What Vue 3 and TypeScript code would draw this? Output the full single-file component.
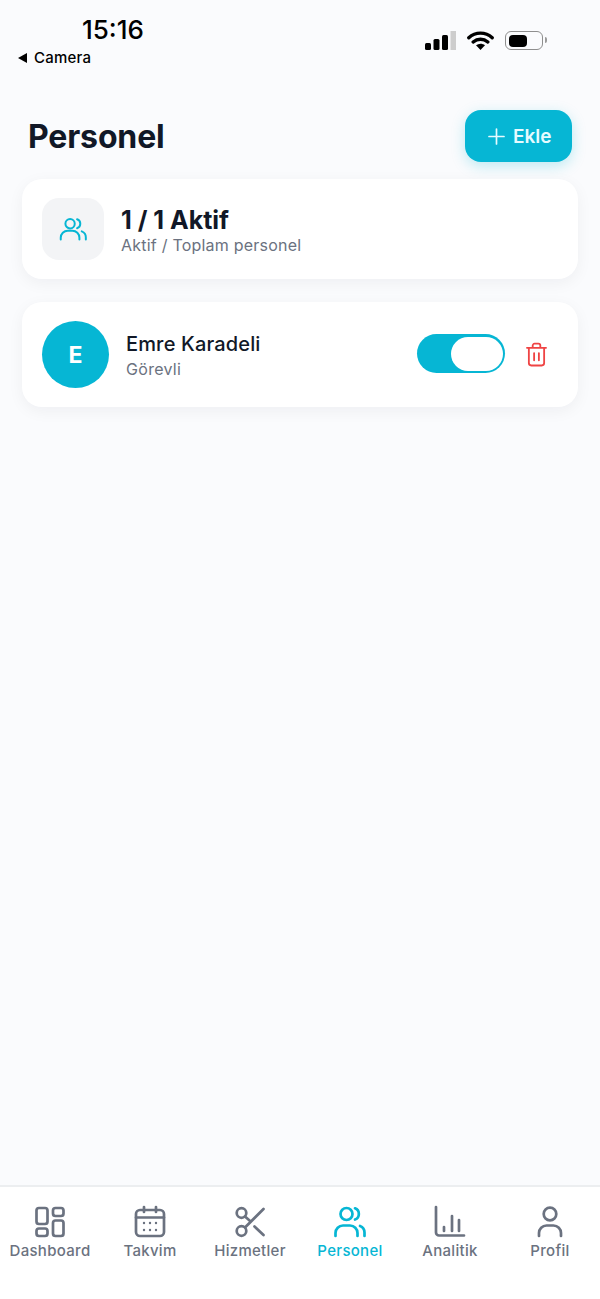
<script setup lang="ts">
const tabs = [
  { label: 'Dashboard', icon: 'dashboard' },
  { label: 'Takvim', icon: 'calendar' },
  { label: 'Hizmetler', icon: 'scissors' },
  { label: 'Personel', icon: 'users', active: true },
  { label: 'Analitik', icon: 'chart' },
  { label: 'Profil', icon: 'user' }
]
</script>

<template>
  <div class="screen">
    <header class="status">
      <div class="status-left">
        <div class="time">15:16</div>
        <div class="back"><span class="back-arrow"></span>Camera</div>
      </div>
      <div class="status-right">
        <svg width="31" height="19" viewBox="0 0 31 19">
          <rect x="0" y="12" width="6" height="7" rx="1.500" fill="#000" />
          <rect x="8.500" y="8" width="6" height="11" rx="1.500" fill="#000" />
          <rect x="17" y="4" width="6" height="15" rx="1.500" fill="#000" />
          <rect x="25.500" y="0" width="5.500" height="19" fill="#cdcdcd" />
        </svg>
        <svg width="27" height="19" viewBox="0 0 27 19">
          <path d="M1.800 6.800C8.500.6 18.500.6 25.200 6.800M6.200 11c4.300-3.700 10.300-3.700 14.600 0" fill="none" stroke="#000" stroke-width="3.400" stroke-linecap="round" />
          <path d="M9 14.200c2.800-2 6.200-2 9 0l-4.500 4.800z" fill="#000" />
        </svg>
        <div class="battery"><div class="battery-fill"></div></div>
      </div>
    </header>

    <main class="content">
      <div class="page-head">
        <h1>Personel</h1>
        <button class="add-btn">
          <svg width="17" height="17" viewBox="0 0 17 17"><path d="M8.500 1v15M1 8.500h15" stroke="#e6fbff" stroke-width="1.700" stroke-linecap="round" /></svg>
          Ekle
        </button>
      </div>

      <section class="card summary">
        <div class="summary-icon">
          <svg width="28" height="28" viewBox="0 0 24 24" fill="none" stroke="#06b6d4" stroke-width="1.700" stroke-linecap="round" stroke-linejoin="round">
            <circle cx="9.500" cy="7.500" r="4" />
            <path d="M15.500 3.700a4 4 0 0 1 0 7.600M1.500 21v-1.500a6 6 0 0 1 6-6h4a6 6 0 0 1 6 6V21M19.500 14a5.500 5.500 0 0 1 3.500 5.300V21" />
          </svg>
        </div>
        <div class="summary-text">
          <div class="summary-title">1 / 1 Aktif</div>
          <div class="summary-sub">Aktif / Toplam personel</div>
        </div>
      </section>

      <section class="card person">
        <div class="avatar">E</div>
        <div class="person-info">
          <div class="person-name">Emre Karadeli</div>
          <div class="person-role">Görevli</div>
        </div>
        <div class="toggle"><div class="knob"></div></div>
        <svg class="trash" width="21" height="25" viewBox="0 0 22 25" fill="none" stroke="#ef4444" stroke-width="1.900" stroke-linecap="round" stroke-linejoin="round">
          <path d="M1 5.500h20M7 5.500V3.200A2 2 0 0 1 9 1.200h4a2 2 0 0 1 2 2v2.300M3 5.500v16a2.500 2.500 0 0 0 2.500 2.500h11a2.500 2.500 0 0 0 2.500-2.500v-16M8.500 11v7.500M13.500 11v7.500" />
        </svg>
      </section>
    </main>

    <nav class="tabbar">
      <div v-for="tab in tabs" :key="tab.label" class="tab" :class="{ active: tab.active }">
        <svg width="34" height="34" viewBox="0 0 34 34" fill="none" stroke="currentColor" stroke-width="2.700" stroke-linecap="round" stroke-linejoin="round">
          <template v-if="tab.icon === 'dashboard'">
            <rect x="3.500" y="3" width="11" height="16" rx="2.500" />
            <rect x="20" y="3" width="10.500" height="8" rx="2.500" />
            <rect x="20" y="15.500" width="10.500" height="15.500" rx="2.500" />
            <rect x="3.500" y="23.500" width="11" height="7.500" rx="2.500" />
          </template>
          <template v-else-if="tab.icon === 'calendar'">
            <rect x="3" y="5" width="28" height="26" rx="4" />
            <path d="M3 12.500h28M11 2v5M23 2v5" />
            <path d="M11 18h.01M17 18h.01M23 18h.01M11 25h.01M17 25h.01M23 25h.01" stroke-width="2.400" />
          </template>
          <template v-else-if="tab.icon === 'scissors'">
            <circle cx="8.500" cy="8" r="4.800" />
            <circle cx="8.500" cy="26" r="4.800" />
            <path d="M12 11.500 16.500 15.500M12 22.500 30.500 4M21.500 21.500l9 8.500" />
          </template>
          <template v-else-if="tab.icon === 'users'">
            <circle cx="13.500" cy="9" r="6" />
            <path d="M22 3.300a6 6 0 0 1 0 11.200M2.500 31v-3a7.500 7.500 0 0 1 7.500-7.500h7a7.500 7.500 0 0 1 7.500 7.500v3M27 21a7 7 0 0 1 4.500 6.500V31" />
          </template>
          <template v-else-if="tab.icon === 'chart'">
            <path d="M3 2v25.500a3 3 0 0 0 3 3h25M11 22v4M19 11v15M26 15v11" />
          </template>
          <template v-else>
            <circle cx="17" cy="9" r="6.300" />
            <path d="M6 31v-3a7.500 7.500 0 0 1 7.500-7.500h7A7.500 7.500 0 0 1 28 28v3" />
          </template>
        </svg>
        <span>{{ tab.label }}</span>
      </div>
    </nav>
  </div>
</template>

<style scoped>
.screen {
  width: 600px;
  height: 1299px;
  display: flex;
  flex-direction: column;
  background: #fafbfd;
  font-family: Inter, 'Liberation Sans', sans-serif;
  color: #111827;
  overflow: hidden;
}

.status {
  height: 110px;
  flex: none;
  display: flex;
  justify-content: space-between;
  padding: 15px 57px 0 18px;
  box-sizing: border-box;
}

.time {
  margin-left: 64px;
  font-size: 26px;
  line-height: 30px;
  font-weight: 500;
  color: #000;
}

.back {
  display: flex;
  align-items: center;
  gap: 7px;
  margin-top: 4px;
  font-size: 15px;
  line-height: 18px;
  font-weight: 500;
  letter-spacing: 0.2px;
  color: #000;
}

.back-arrow {
  width: 0;
  height: 0;
  border-top: 5px solid transparent;
  border-bottom: 5px solid transparent;
  border-right: 9px solid #000;
}

.status-right {
  display: flex;
  align-items: center;
  gap: 11px;
  height: 19px;
  margin-top: 16px;
}

.battery {
  position: relative;
  width: 38px;
  height: 19px;
  padding: 2.500px 3px;
  box-sizing: border-box;
  border: 1.500px solid #8e8e8e;
  border-radius: 6px;
}

.battery::after {
  content: '';
  position: absolute;
  right: -5px;
  top: 5px;
  width: 2px;
  height: 6px;
  border-radius: 0 2px 2px 0;
  background: #9a9a9a;
}

.battery-fill {
  width: 18px;
  height: 100%;
  border-radius: 4px;
  background: #000;
}

.content {
  flex: 1;
  display: flex;
  flex-direction: column;
  padding: 0 22px;
}

.page-head {
  display: flex;
  justify-content: space-between;
  align-items: center;
  height: 52px;
  margin-bottom: 17px;
  padding: 0 6px;
}

h1 {
  margin: 0;
  font-size: 32px;
  font-weight: 700;
  letter-spacing: -0.15px;
  color: #111827;
}

.add-btn {
  display: flex;
  align-items: center;
  gap: 8px;
  width: 107px;
  height: 52px;
  padding: 0 0 0 23px;
  border: none;
  border-radius: 16px;
  background: #06b6d4;
  color: #e6fbff;
  font-family: inherit;
  font-size: 19px;
  font-weight: 600;
  box-shadow: 0 4px 14px rgba(6, 182, 212, 0.25);
}

.card {
  display: flex;
  align-items: center;
  padding: 0 20px;
  background: #fff;
  border-radius: 20px;
  box-shadow: 0 4px 16px rgba(17, 24, 39, 0.05);
}

.summary {
  height: 100px;
  gap: 17px;
  margin-bottom: 23px;
}

.summary-icon {
  width: 62px;
  height: 62px;
  display: flex;
  align-items: center;
  justify-content: center;
  border-radius: 17px;
  background: #f3f4f6;
}

.summary-text {
  margin-top: 4px;
}

.summary-title {
  font-size: 25px;
  line-height: 28px;
  font-weight: 700;
  color: #111827;
}

.summary-sub {
  font-size: 16px;
  line-height: 22px;
  letter-spacing: 0.22px;
  color: #6b7280;
}

.person {
  height: 105px;
}

.avatar {
  width: 67px;
  height: 67px;
  flex: none;
  display: flex;
  align-items: center;
  justify-content: center;
  border-radius: 50%;
  background: #06b6d4;
  color: #fff;
  font-size: 23px;
  font-weight: 700;
}

.person-info {
  flex: 1;
  margin-left: 17px;
}

.person-name {
  margin-top: 1px;
  font-size: 20px;
  line-height: 26px;
  font-weight: 500;
  letter-spacing: 0.15px;
  color: #111827;
}

.person-role {
  margin-top: 2px;
  font-size: 16px;
  line-height: 20px;
  letter-spacing: 0.3px;
  color: #6b7280;
}

.toggle {
  width: 88px;
  height: 39px;
  margin-bottom: 2px;
  box-sizing: border-box;
  display: flex;
  justify-content: flex-end;
  padding: 2.500px;
  border-radius: 20px;
  background: #06b6d4;
}

.knob {
  width: 52px;
  height: 100%;
  border-radius: 17px;
  background: #fff;
}

.trash {
  margin: 0 10px 0 22px;
  transform: translateX(-1px);
}

.tabbar {
  height: 114px;
  flex: none;
  display: grid;
  grid-template-columns: repeat(6, 1fr);
  box-sizing: border-box;
  padding-top: 18px;
  align-items: start;
  border-top: 2px solid #eceef0;
  background: #fff;
}

.tab {
  display: flex;
  flex-direction: column;
  align-items: center;
  gap: 2px;
  color: #6b7280;
  font-size: 15px;
  line-height: 20px;
  font-weight: 500;
  letter-spacing: 0.3px;
}

.tab.active {
  color: #06b6d4;
}
</style>
